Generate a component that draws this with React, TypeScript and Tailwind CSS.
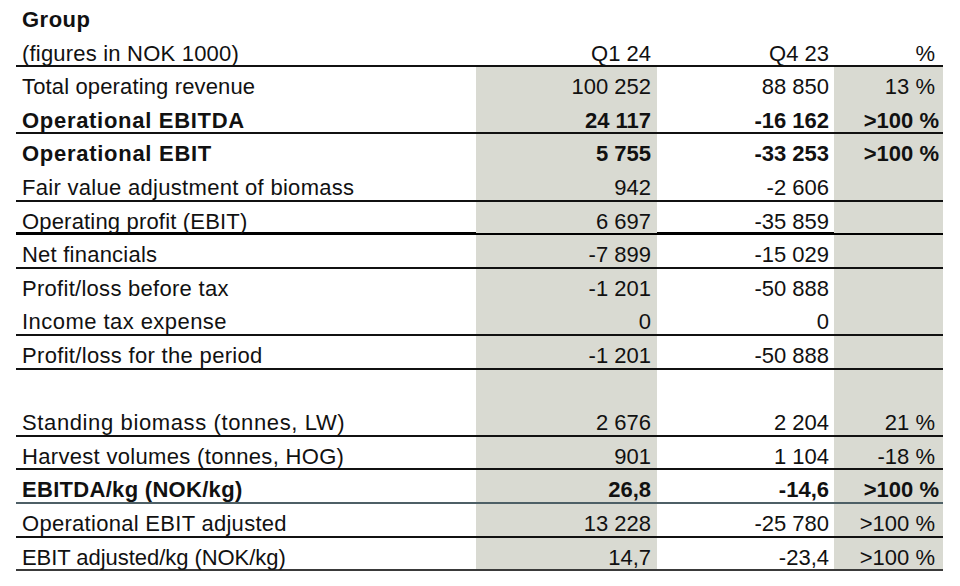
import React from "react";

type Row = {
  label: string;
  q1?: string;
  q4?: string;
  pct?: string;
  bold?: boolean;
  border?: "none" | "thin" | "thick" | "blue" | "gray";
  shade?: boolean;
  tr: string;
};

const rows: Row[] = [
  { label: "Group", bold: true, border: "none", shade: false, tr: "tracking-[0.5px]" },
  { label: "(figures in NOK 1000)", q1: "Q1 24", q4: "Q4 23", pct: "%", border: "thin", shade: false, tr: "tracking-[0.2px]" },
  { label: "Total operating revenue", q1: "100 252", q4: "88 850", pct: "13 %", border: "none", tr: "tracking-[0.14px]" },
  { label: "Operational EBITDA", q1: "24 117", q4: "-16 162", pct: ">100 %", bold: true, border: "thin", tr: "tracking-[0.7px]" },
  { label: "Operational EBIT", q1: "5 755", q4: "-33 253", pct: ">100 %", bold: true, border: "none", tr: "tracking-[0.72px]" },
  { label: "Fair value adjustment of biomass", q1: "942", q4: "-2 606", border: "thin", tr: "tracking-[0.3px]" },
  { label: "Operating profit (EBIT)", q1: "6 697", q4: "-35 859", border: "thick", tr: "tracking-[0.18px]" },
  { label: "Net financials", q1: "-7 899", q4: "-15 029", border: "thin", tr: "tracking-[0.23px]" },
  { label: "Profit/loss before tax", q1: "-1 201", q4: "-50 888", border: "none", tr: "tracking-[0.28px]" },
  { label: "Income tax expense", q1: "0", q4: "0", border: "thin", tr: "tracking-[0.45px]" },
  { label: "Profit/loss for the period", q1: "-1 201", q4: "-50 888", border: "thin", tr: "tracking-[0.32px]" },
  { label: "", border: "none", tr: "" },
  { label: "Standing biomass (tonnes, LW)", q1: "2 676", q4: "2 204", pct: "21 %", border: "thin", tr: "tracking-[0.62px]" },
  { label: "Harvest volumes (tonnes, HOG)", q1: "901", q4: "1 104", pct: "-18 %", border: "thin", tr: "tracking-[0.32px]" },
  { label: "EBITDA/kg (NOK/kg)", q1: "26,8", q4: "-14,6", pct: ">100 %", bold: true, border: "blue", tr: "tracking-[0.3px]" },
  { label: "Operational EBIT adjusted", q1: "13 228", q4: "-25 780", pct: ">100 %", border: "thin", tr: "tracking-[0.29px]" },
  { label: "EBIT adjusted/kg (NOK/kg)", q1: "14,7", q4: "-23,4", pct: ">100 %", border: "gray", tr: "tracking-[-0.05px]" },
];

function borderClass(b: Row["border"]) {
  switch (b) {
    case "thin":
      return "border-b-2 border-[#111]";
    case "thick":
      return "border-b-[3px] border-black";
    case "blue":
      return "border-b-2 border-[#4d5f66]";
    case "gray":
      return "border-b-2 border-[#3a3a3a]";
    default:
      return "";
  }
}

export default function App() {
  return (
    <div
      className="w-[960px] h-[586px] bg-white text-[#111] text-[22px]"
      style={{ fontFamily: '"Liberation Sans", Arial, sans-serif' }}
    >
      <div className="ml-[16px] w-[927px]">
        {rows.map((r, i) => {
          const shade = r.shade !== false;
          return (
            <div
              key={i}
              className={`grid grid-cols-[460px_181px_177px_109px] h-[33.6px] box-border ${borderClass(
                r.border
              )} ${r.bold ? "font-bold" : ""}`}
            >
              <div className={`pl-[6px] pt-[9px] leading-[22px] whitespace-nowrap ${r.tr}`}>{r.label}</div>
              <div className={`pr-[6px] pt-[9px] leading-[22px] text-right whitespace-nowrap ${shade ? "bg-[#d9dad2]" : ""}`}>
                {r.q1}
              </div>
              <div className="pr-[5px] pt-[9px] leading-[22px] text-right whitespace-nowrap">{r.q4}</div>
              <div
                className={`${r.bold ? "pr-[4px]" : "pr-[8px]"} pt-[9px] leading-[22px] text-right whitespace-nowrap ${
                  shade ? "bg-[#d9dad2]" : ""
                }`}
              >
                {r.pct}
              </div>
            </div>
          );
        })}
      </div>
    </div>
  );
}
